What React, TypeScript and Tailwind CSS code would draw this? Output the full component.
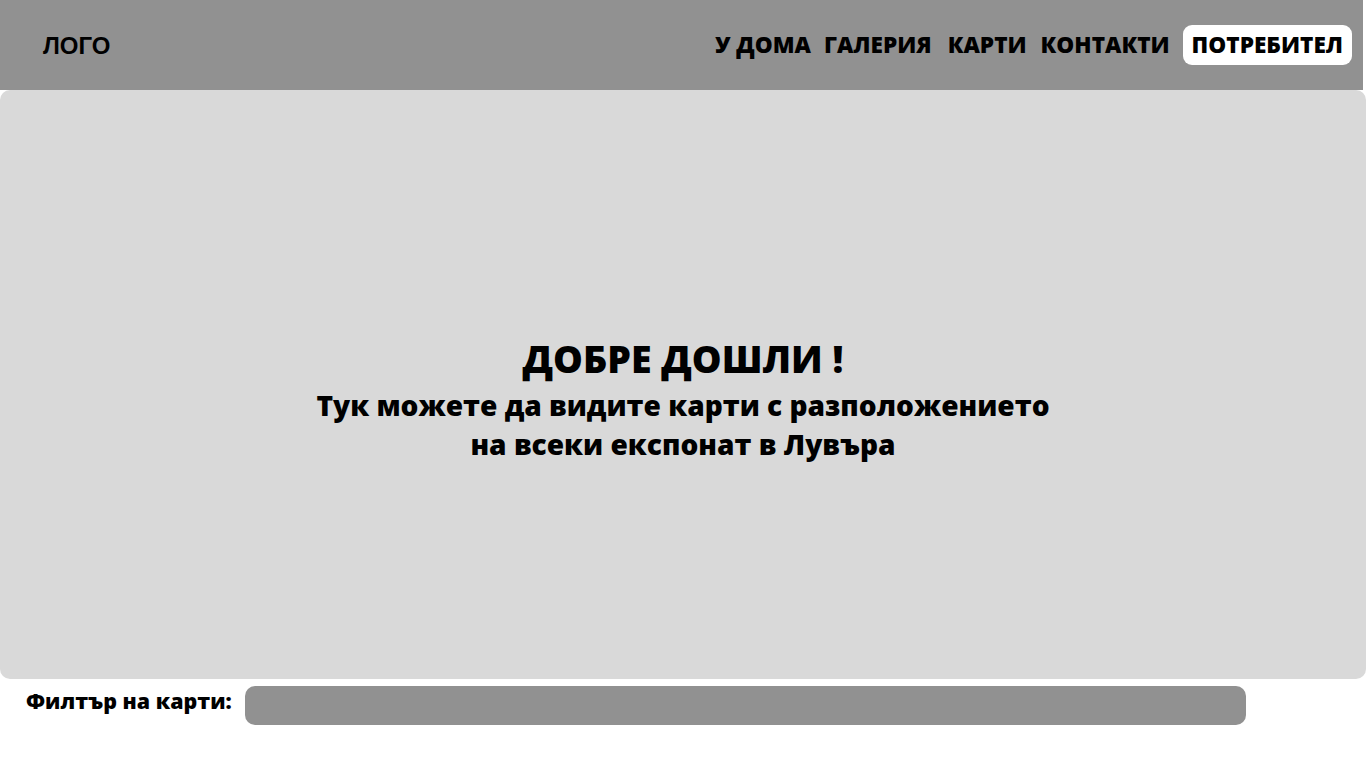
export default function App() {
  const font = { fontFamily: '"Open Sans", sans-serif' };
  return (
    <div className="w-[1366px] h-[768px] bg-white overflow-hidden" style={font}>
      <header className="h-[90px] w-[1363px] bg-[#919191] flex items-center justify-between pl-[43px] pr-[11px]">
        <div className="text-[24px] font-bold text-black mt-[1px]" style={{ fontFamily: '"Liberation Sans", Arial, sans-serif' }}>
          ЛОГО
        </div>
        <nav className="flex items-center text-[22.6px] font-extrabold text-black">
          <a className="mr-[13px]">У ДОМА</a>
          <a className="mr-[16px]">ГАЛЕРИЯ</a>
          <a className="mr-[14px]">КАРТИ</a>
          <a className="mr-[13px]">КОНТАКТИ</a>
          <a className="bg-white rounded-[9px] h-[40px] px-[9px] flex items-center">ПОТРЕБИТЕЛ</a>
        </nav>
      </header>
      <main className="h-[589px] bg-[#d9d9d9] rounded-[10px] flex flex-col items-center justify-center text-black text-center pt-[30px]">
        <h1 className="text-[37.5px] leading-[47px] font-extrabold">ДОБРЕ ДОШЛИ !</h1>
        <p className="text-[28.1px] leading-[39px] font-extrabold mt-[4px]">
          Тук можете да видите карти с разположението
          <br />
          на всеки експонат в Лувъра
        </p>
      </main>
      <div className="flex items-start pt-[7px] pl-[26px]">
        <label className="text-[21.4px] font-extrabold text-black leading-[30px]">Филтър на карти:</label>
        <div className="ml-[13px] w-[1001px] h-[39px] bg-[#919191] rounded-[10px]" />
      </div>
    </div>
  );
}
